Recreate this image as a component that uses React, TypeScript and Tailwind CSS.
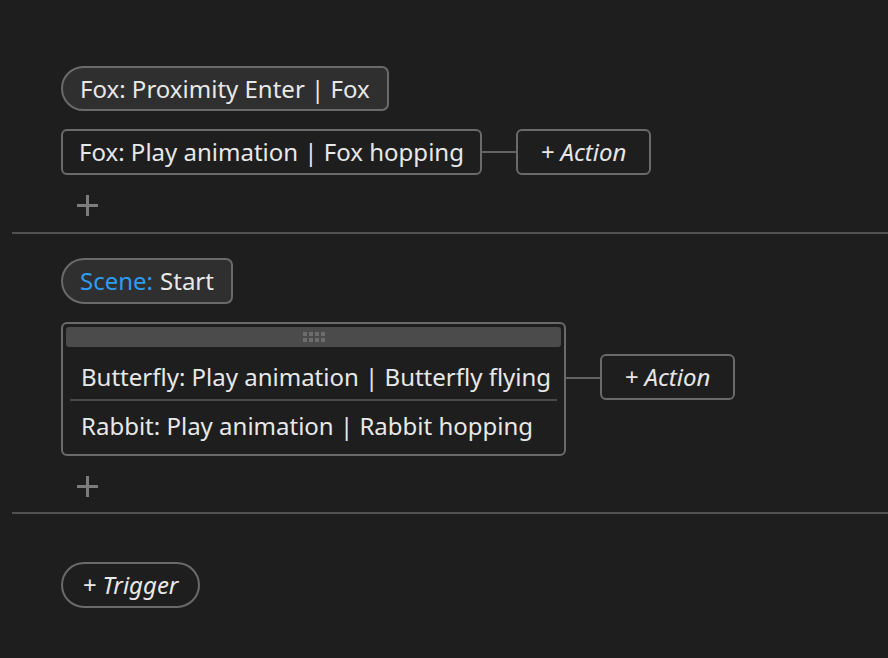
import React from "react";

const font = { fontFamily: '"Noto Sans", "Open Sans", sans-serif' };

function Plus() {
  return (
    <div className="h-[21px] flex items-center pl-[16px]">
      <svg width="21" height="21" viewBox="0 0 21 21">
        <rect x="9" y="0" width="3" height="21" fill="#7c7c7c" />
        <rect x="0" y="9" width="21" height="3" fill="#7c7c7c" />
      </svg>
    </div>
  );
}

function Connector() {
  return <div className="w-[34px] h-[2px] bg-[#626262]" />;
}

function ActionButton() {
  return (
    <div className="h-[46px] w-[135px] flex items-center justify-center rounded-[6px] border-2 border-[#6a6a6a] text-[24px] text-[#e6e6e6] italic">
      + Action
    </div>
  );
}

function Grip() {
  return (
    <div className="grid grid-cols-4 gap-[2px]">
      {Array.from({ length: 8 }).map((_, i) => (
        <div key={i} className="w-[4px] h-[4px] bg-[#6c6c6c]" />
      ))}
    </div>
  );
}

export default function App() {
  return (
    <div className="w-[888px] h-[658px] bg-[#1e1e1e] pl-[12px] overflow-hidden text-[#e8e8e8]" style={font}>
      {/* Section 1 */}
      <div className="pl-[49px] pt-[66px] pb-[16px] flex flex-col">
        <div className="self-start h-[45px] flex items-center px-[17px] bg-[#2f2f2f] border-2 border-[#6a6a6a] rounded-l-[23px] rounded-r-[7px] text-[24px]">
          Fox: Proximity Enter | Fox
        </div>
        <div className="mt-[18px] flex items-center">
          <div className="h-[46px] flex items-center px-[16px] border-2 border-[#6a6a6a] rounded-[6px] text-[24px]">
            Fox: Play animation | Fox hopping
          </div>
          <Connector />
          <ActionButton />
        </div>
        <div className="mt-[20px]">
          <Plus />
        </div>
      </div>
      <div className="h-[2px] bg-[#525252]" />

      {/* Section 2 */}
      <div className="pl-[49px] pt-[24px] pb-[15px] flex flex-col">
        <div className="self-start h-[46px] flex items-center px-[17px] bg-[#2f2f2f] border-2 border-[#6a6a6a] rounded-l-[23px] rounded-r-[7px] text-[24px]">
          <span className="text-[#2d9cf2]">Scene:</span>
          <span className="ml-[7px]">Start</span>
        </div>
        <div className="mt-[18px] flex items-start">
          <div className="w-[505px] border-2 border-[#6a6a6a] rounded-[6px] p-[3px] flex flex-col">
            <div className="h-[20px] rounded-[3px] bg-[#4b4b4b] flex items-center justify-center">
              <Grip />
            </div>
            <div className="h-[52px] pt-[8px] flex items-center px-[15px] text-[24px] whitespace-nowrap">
              Butterfly: Play animation | Butterfly flying
            </div>
            <div className="mx-[4px] h-[2px] bg-[#4a4a4a]" />
            <div className="h-[50px] flex items-center px-[15px] text-[24px] whitespace-nowrap">
              Rabbit: Play animation | Rabbit hopping
            </div>
          </div>
          <div className="mt-[55px]">
            <Connector />
          </div>
          <div className="mt-[32px]">
            <ActionButton />
          </div>
        </div>
        <div className="mt-[20px]">
          <Plus />
        </div>
      </div>
      <div className="h-[2px] bg-[#525252]" />

      {/* Section 3 */}
      <div className="pl-[49px] pt-[48px]">
        <div className="h-[46px] w-[139px] flex items-center justify-center border-2 border-[#6a6a6a] rounded-full text-[24px] italic">
          + Trigger
        </div>
      </div>
    </div>
  );
}
